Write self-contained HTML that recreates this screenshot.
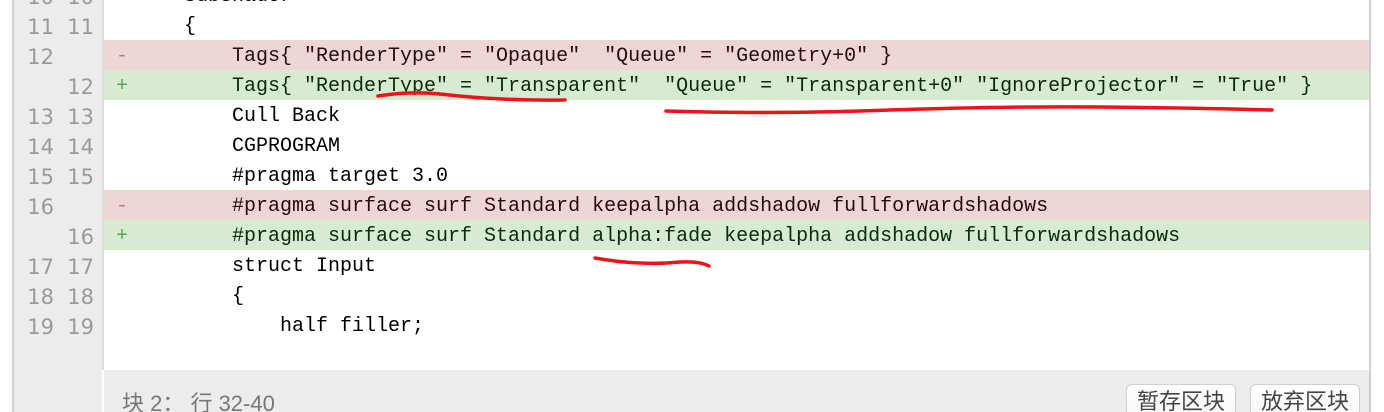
<!DOCTYPE html>
<html><head><meta charset="utf-8"><style>
html,body{margin:0;width:1384px;height:412px;overflow:hidden}
body{background:#fff;position:relative;font-family:"Liberation Sans","Noto Sans CJK SC",sans-serif}
#lb{position:absolute;left:12px;top:0;width:2px;height:412px;background:#cfcfcf}
#rb{position:absolute;left:1369px;top:0;width:2px;height:412px;background:#cfcfcf}
#gut{position:absolute;left:14px;top:0;width:88px;height:412px;background:#ececec}
#gl{position:absolute;left:102px;top:0;width:2px;height:370px;background:#dcdcdc}
.row{position:absolute;left:14px;width:1355px;height:30px;line-height:34px}
.n1,.n2{position:absolute;width:32px;text-align:right;color:#9a9a9a;font-size:21px;font-family:"DejaVu Sans",sans-serif}
.n1{left:8px}.n2{left:48px}
.s{position:absolute;left:102px;font-family:"Liberation Mono",monospace;font-size:20px}
.c{position:absolute;left:122px;font-family:"Liberation Mono",monospace;font-size:20px;white-space:pre;color:#000}
.del .bg,.add .bg{position:absolute;left:90px;right:0;top:0;bottom:0}
.del .bg{background:#efd6d6}.add .bg{background:#d7ebd0}
#foot{position:absolute;left:104px;top:370px;width:1265px;height:42px;background:#ececec;overflow:hidden}
#ft{position:absolute;left:18px;top:16px;color:#777;font-size:22px}
.btn{position:absolute;top:14px;width:108px;height:40px;border:1px solid #cfcfcf;border-radius:6px;background:linear-gradient(#fff,#f4f4f4);font-size:22px;color:#444;text-align:center;line-height:34px}
</style></head><body>
<div id="lb"></div><div id="rb"></div><div id="gut"></div><div id="gl"></div>
<div class="row" style="top:-20px"><span class="n1">10</span><span class="n2">10</span><span class="c">    SubShader</span></div>
<div class="row" style="top:10px"><span class="n1">11</span><span class="n2">11</span><span class="c">    {</span></div>
<div class="row del" style="top:40px"><div class="bg"></div><span class="n1">12</span><span class="s" style="color:#c07878">-</span><span class="c" style="color:#2a0a0a">        Tags{ "RenderType" = "Opaque"  "Queue" = "Geometry+0" }</span></div>
<div class="row add" style="top:70px"><div class="bg"></div><span class="n2">12</span><span class="s" style="color:#5aa55a">+</span><span class="c" style="color:#0a2a0a">        Tags{ "RenderType" = "Transparent"  "Queue" = "Transparent+0" "IgnoreProjector" = "True" }</span></div>
<div class="row" style="top:100px"><span class="n1">13</span><span class="n2">13</span><span class="c">        Cull Back</span></div>
<div class="row" style="top:130px"><span class="n1">14</span><span class="n2">14</span><span class="c">        CGPROGRAM</span></div>
<div class="row" style="top:160px"><span class="n1">15</span><span class="n2">15</span><span class="c">        #pragma target 3.0</span></div>
<div class="row del" style="top:190px"><div class="bg"></div><span class="n1">16</span><span class="s" style="color:#c07878">-</span><span class="c" style="color:#2a0a0a">        #pragma surface surf Standard keepalpha addshadow fullforwardshadows</span></div>
<div class="row add" style="top:220px"><div class="bg"></div><span class="n2">16</span><span class="s" style="color:#5aa55a">+</span><span class="c" style="color:#0a2a0a">        #pragma surface surf Standard alpha:fade keepalpha addshadow fullforwardshadows</span></div>
<div class="row" style="top:250px"><span class="n1">17</span><span class="n2">17</span><span class="c">        struct Input</span></div>
<div class="row" style="top:280px"><span class="n1">18</span><span class="n2">18</span><span class="c">        {</span></div>
<div class="row" style="top:310px"><span class="n1">19</span><span class="n2">19</span><span class="c">            half filler;</span></div>
<div id="foot"><span id="ft">块 2： 行 32-40</span>
<div class="btn" style="left:1022px">暂存区块</div><div class="btn" style="left:1146px">放弃区块</div></div>
<svg style="position:absolute;left:0;top:0" width="1384" height="412">
<g fill="none" stroke="#e8151b" stroke-width="3.5" stroke-linecap="round">
<path d="M378 96 Q410 91 440 94 Q500 101 565 100"/>
<path d="M666 111 Q760 114 860 111 Q1000 106 1100 107 Q1200 108 1272 110"/>
<path d="M595 258 Q640 266 680 262 Q700 261 709 266"/>
</g></svg>
</body></html>
